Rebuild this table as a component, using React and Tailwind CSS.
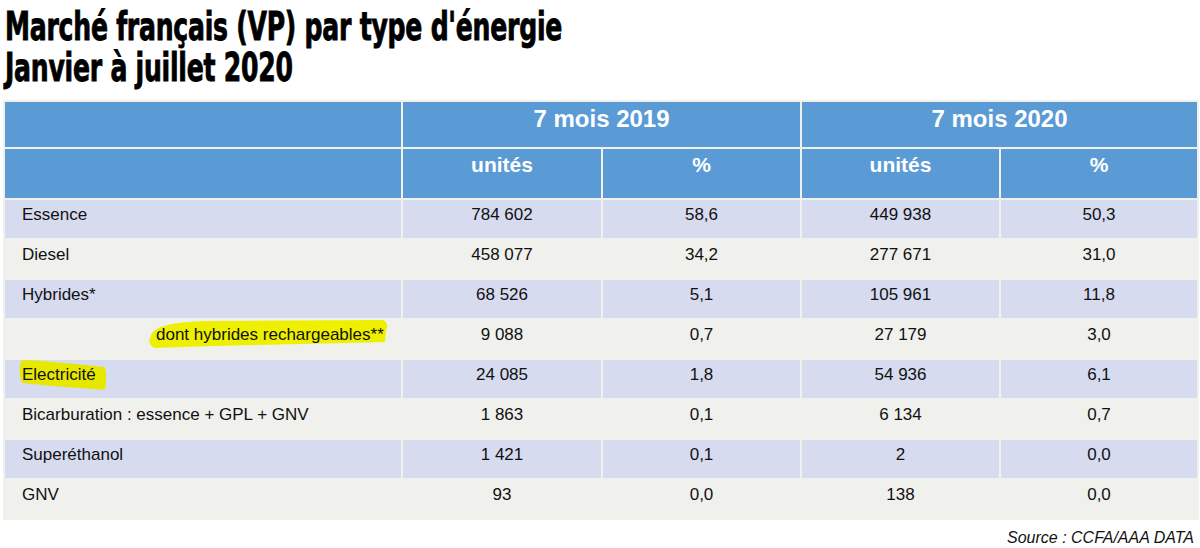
const rows = [
  { label: "Essence", a: "784 602", b: "58,6", c: "449 938", d: "50,3", tint: true },
  { label: "Diesel", a: "458 077", b: "34,2", c: "277 671", d: "31,0" },
  { label: "Hybrides*", a: "68 526", b: "5,1", c: "105 961", d: "11,8", tint: true },
  { label: "dont hybrides rechargeables**", a: "9 088", b: "0,7", c: "27 179", d: "3,0", mark: "sub" },
  { label: "Electricité", a: "24 085", b: "1,8", c: "54 936", d: "6,1", tint: true, mark: "elec" },
  { label: "Bicarburation : essence + GPL + GNV", a: "1 863", b: "0,1", c: "6 134", d: "0,7" },
  { label: "Superéthanol", a: "1 421", b: "0,1", c: "2", d: "0,0", tint: true },
  { label: "GNV", a: "93", b: "0,0", c: "138", d: "0,0" },
];

const Marker = ({ kind }) => {
  if (kind === "sub") {
    return (
      <svg className="absolute left-0 top-0" width="396" height="38">
        <path
          d="M146,16 C148,6 170,2 200,1 L378,0 C383,2 383,8 381,10 L380,22 C300,24 200,26 150,28 C144,26 143,20 146,16 Z"
          fill="#eef000"
        />
      </svg>
    );
  }
  return (
    <svg className="absolute left-0 top-0" width="396" height="38">
      <path
        d="M16,2 C14,-1 30,0 60,3 L99,7 C102,9 102,28 99,30 C80,28 40,26 18,23 C14,20 14,6 16,2 Z"
        fill="#e6e800"
      />
    </svg>
  );
};

const Cell = ({ children, tint }) => (
  <div
    className={`h-[38px] pt-[5px] text-center leading-[20px] ${tint ? "bg-[#d6dbef]" : "bg-[#f0f0ec]"}`}
  >
    {children}
  </div>
);

export default function App() {
  return (
    <div className="w-[1200px] h-[548px] bg-white font-['Liberation_Sans',Arial,sans-serif] text-[#111]">
      <div className="h-[100px] pl-[5px] pt-[6px]">
        <div className="origin-top-left scale-x-[0.775] scale-y-[1.1] w-[720px] font-['DejaVu_Sans_Condensed','Liberation_Sans',sans-serif] font-bold text-[36px] leading-[37px] tracking-[-0.3px] text-black [-webkit-text-stroke:0.8px_black] whitespace-nowrap">
          <div>Marché français (VP) par type d'énergie</div>
          <div>Janvier à juillet 2020</div>
        </div>
      </div>

      <div className="ml-[3px] w-[1196px] p-[2px] bg-[#f0f0ec] grid grid-cols-[396px_198px_197px_197px_196px] gap-[2px]">
        <div className="h-[45px] bg-[#5b9bd5]" />
        <div className="col-span-2 h-[45px] bg-[#5b9bd5] pt-[3px] text-center text-white font-bold text-[24px] leading-[28px]">
          7 mois 2019
        </div>
        <div className="col-span-2 h-[45px] bg-[#5b9bd5] pt-[3px] text-center text-white font-bold text-[24px] leading-[28px]">
          7 mois 2020
        </div>

        <div className="h-[49px] bg-[#5b9bd5]" />
        {["unités", "%", "unités", "%"].map((h, i) => (
          <div
            key={i}
            className="h-[49px] bg-[#5b9bd5] pt-[4px] text-center text-white font-bold text-[21px] leading-[24px]"
          >
            {h}
          </div>
        ))}

        {rows.map((r) => (
          <div key={r.label} className="contents text-[17px]">
            <div
              className={`relative h-[38px] pt-[5px] leading-[20px] ${r.mark === "sub" ? "pl-[151px]" : "pl-[17px]"} ${r.tint ? "bg-[#d6dbef]" : "bg-[#f0f0ec]"}`}
            >
              {r.mark && <Marker kind={r.mark} />}
              <span className="relative">{r.label}</span>
            </div>
            <Cell tint={r.tint}>{r.a}</Cell>
            <Cell tint={r.tint}>{r.b}</Cell>
            <Cell tint={r.tint}>{r.c}</Cell>
            <Cell tint={r.tint}>{r.d}</Cell>
          </div>
        ))}
      </div>

      <div className="pr-[6px] pt-[8px] text-right italic text-[16px] leading-[20px]">
        Source : CCFA/AAA DATA
      </div>
    </div>
  );
}
